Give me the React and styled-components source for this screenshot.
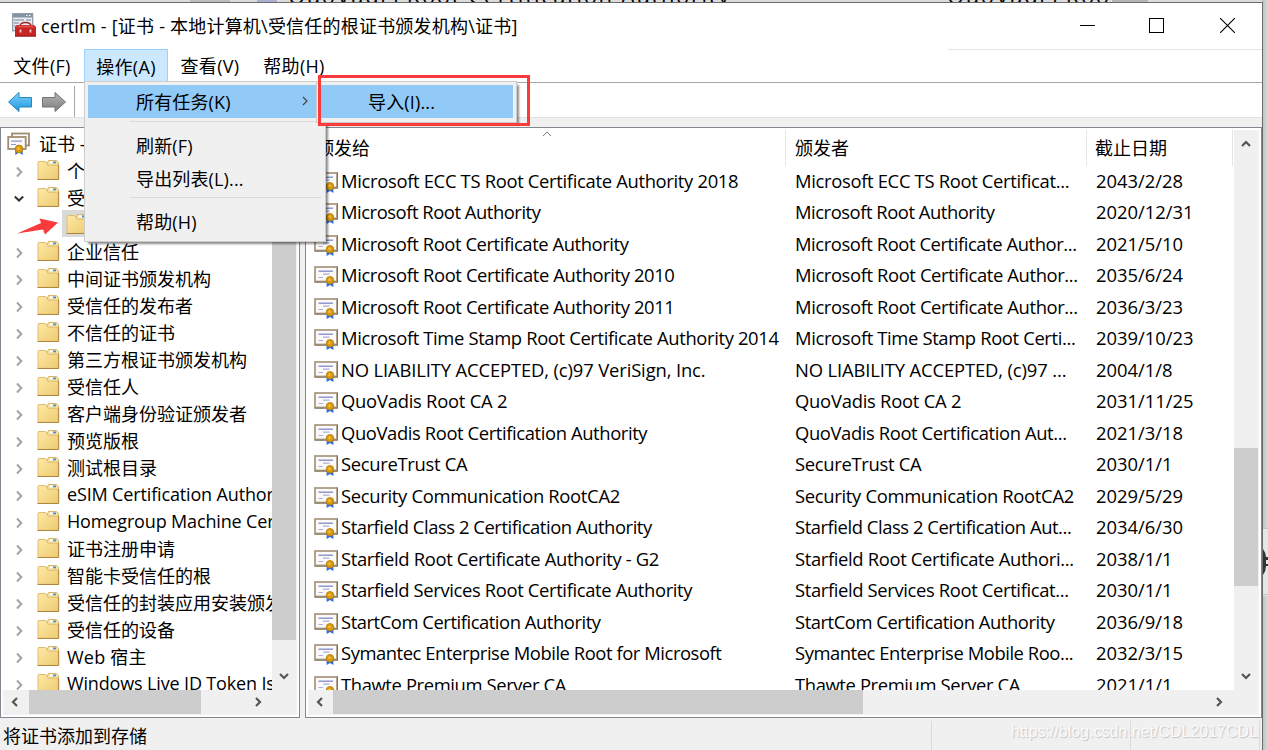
import React from "react";
import styled, { createGlobalStyle } from "styled-components";

const Global = createGlobalStyle`
  *, *::before, *::after { box-sizing: border-box; }
  html, body { margin: 0; padding: 0; overflow: hidden; }
  body {
    font-family: "Open Sans", "Noto Sans CJK SC", sans-serif;
    font-size: 18px;
    color: #000;
    background: #dcdcdc;
  }
  svg { flex: none; }
`;

const Desktop = styled.div`
  position: relative;
  width: 1268px;
  height: 750px;
  padding-top: 2px;
  overflow: hidden;
  background: linear-gradient(90deg, #dcdcdc 1262px, #bdbdbd 1262px, #dadada 1268px);
`;

const Behind = styled.div`
  position: absolute;
  top: 0;
  left: ${(p) => p.$x}px;
  width: ${(p) => p.$w}px;
  height: 2px;
  overflow: hidden;
  font-size: 22px;
  line-height: 26px;
  letter-spacing: ${(p) => p.$track || 0}px;
  white-space: nowrap;
  span { display: block; margin-top: -18px; }
`;

const BehindBlock = styled.div`
  position: absolute;
  top: 0;
  left: ${(p) => p.$x}px;
  width: ${(p) => p.$w}px;
  height: 2px;
  background: ${(p) => p.$c};
`;

const BehindPanel = styled.svg`
  position: absolute;
  left: 1263px;
  top: 528px;
`;

const Window = styled.div`
  position: relative;
  width: 1263px;
  height: 748px;
  display: flex;
  flex-direction: column;
  border-top: 1px solid #6b6b6b;
  border-right: 1px solid #6b6b6b;
  background: #f0f0f0;
`;

const TitleBar = styled.div`
  height: 46px;
  flex: none;
  display: flex;
  align-items: center;
  padding-left: 12px;
  padding-bottom: 2px;
  background: #fff;
`;

const Title = styled.span`
  margin-left: 5px;
  flex: 1;
  font-size: 18px;
  letter-spacing: 0.21px;
  white-space: pre;
`;

const Controls = styled.div`
  display: flex;
  gap: 54px;
  padding-right: 27px;
  svg { display: block; }
  svg + svg + svg { margin-left: 2px; }
`;

const MenuBar = styled.div`
  position: relative;
  height: 34px;
  flex: none;
  display: flex;
  background: #fff;
  border-bottom: 1px solid #a8a8a8;
  &::before {
    content: "";
    position: absolute;
    right: 0;
    top: 0;
    width: 314px;
    height: 1px;
    background: #e6e6e6;
  }
`;

const MenuTitle = styled.div`
  width: 84px;
  height: 33px;
  text-align: center;
  white-space: nowrap;
  letter-spacing: 0.3px;
  background: ${(p) => (p.$open ? "#cce8ff" : "transparent")};
  border: 1px solid ${(p) => (p.$open ? "#99d1ff" : "transparent")};
  line-height: ${(p) => (p.$open ? 34 : 32)}px;
`;

const ToolBar = styled.div`
  height: 35px;
  flex: none;
  display: flex;
  align-items: center;
  gap: 8px;
  padding: 3px 0 0 7px;
  background: #fff;
  border-bottom: 1px solid #e2e2e2;
`;

const ToolDivider = styled.div`
  width: 1px;
  height: 31px;
  margin-left: -1px;
  background: #a9a9a9;
`;

const Panes = styled.div`
  flex: none;
  display: flex;
  gap: 5px;
  height: 591px;
  margin-top: 9px;
`;

const Pane = styled.div`
  width: ${(p) => p.$w}px;
  flex: none;
  display: grid;
  grid-template-columns: minmax(0, 1fr) 25px;
  grid-template-rows: minmax(0, 1fr) 25px;
  padding: 2px;
  border: 1px solid #828790;
  background: #fff;
`;

const TreeBody = styled.div`
  overflow: hidden;
`;

const TreeRow = styled.div`
  display: flex;
  align-items: center;
  height: 27px;
  padding-left: ${(p) => (p.$root ? 4 : 11)}px;
  margin-top: ${(p) => (p.$root ? -1 : 0)}px;
  white-space: nowrap;
`;

const TreeChevron = styled.svg`
  width: 10px;
  height: 12px;
  margin-right: 13px;
  margin-top: 4px;
`;

const Selected = styled.div`
  display: flex;
  align-items: center;
  width: 60px;
  height: 27px;
  margin-left: 48px;
  padding-left: 4px;
  background: #d9d9d9;
`;

const TreeLabel = styled.span`
  margin-left: ${(p) => (p.$root ? 8 : 7)}px;
  letter-spacing: ${(p) => p.$track || 0}px;
`;

const ListBody = styled.div`
  overflow: hidden;
`;

const Columns = styled.div`
  display: grid;
  grid-template-columns: 478px 301px 146px;
  white-space: nowrap;
`;

const HeadRow = styled(Columns)`
  position: relative;
  height: 34.5px;
  line-height: 36px;
`;

const Head = styled.div`
  padding-left: ${(p) => p.$pad || 8}px;
  border-right: 1px solid #e5e5e5;
  &:last-child { border-right: 0; }
`;

const SortMark = styled.svg`
  position: absolute;
  left: 234px;
  top: 0;
`;

const ListRow = styled(Columns)`
  height: 31.5px;
  line-height: 31.5px;
  font-size: 18.4px;
`;

const Cell = styled.div`
  display: flex;
  align-items: center;
  gap: 3px;
  padding-left: ${(p) => (p.$icon ? 6 : 9)}px;
  letter-spacing: ${(p) => p.$track || 0}px;
  svg { margin-top: 5px; }
`;

const VBar = styled.div`
  position: relative;
  background: #f0f0f0;
  padding-top: ${(p) => p.$before}px;
`;

const VThumb = styled.div`
  width: 24px;
  height: ${(p) => p.$h}px;
  background: #cdcdcd;
`;

const HBar = styled.div`
  position: relative;
  grid-column: 1 / 3;
  background: #f0f0f0;
  padding-left: ${(p) => p.$before}px;
`;

const HThumb = styled.div`
  width: ${(p) => p.$w}px;
  height: 24px;
  background: #cdcdcd;
`;

const BarArrow = styled.svg`
  position: absolute;
  left: ${(p) => p.$x}px;
  top: ${(p) => p.$y}px;
`;

const StatusBar = styled.div`
  position: relative;
  flex: 1;
  display: grid;
  grid-template-columns: 932px 199px 129px;
  margin-top: 1px;
`;

const StatusCell = styled.div`
  height: 31px;
  margin-top: 2px;
  padding-left: 3px;
  line-height: 31px;
  border-right: 1px solid #dadada;
`;

const Watermark = styled.div`
  position: absolute;
  right: 4px;
  top: 3px;
  font: 16px/20px "Liberation Sans", sans-serif;
  color: #fafafa;
  text-shadow: 1px 1px 1px #c4c4c4;
  white-space: nowrap;
`;

const Menu = styled.div`
  position: absolute;
  left: ${(p) => p.$x}px;
  top: 78px;
  width: ${(p) => p.$w}px;
  padding: ${(p) => (p.$sub ? "3px 3px 4px 3px" : "3px 8px 4px 3px")};
  background: #f0f0f0;
  border: 1px solid #ccc;
  box-shadow: 3px 3px 2px -1px rgba(0, 0, 0, 0.45);
`;

const MenuItem = styled.div`
  display: flex;
  align-items: center;
  justify-content: space-between;
  height: 33px;
  padding: 0 9px ${(p) => (p.$hot ? 1 : 0)}px 48px;
  letter-spacing: 0.15px;
  white-space: nowrap;
  background: ${(p) => (p.$hot ? "#91c9f7" : "transparent")};
`;

const MenuRule = styled.div`
  height: 1px;
  margin: 3px -4px 6px 42px;
  background: #d9d9d9;
`;

const Highlight = styled.div`
  position: absolute;
  left: 318px;
  top: 72px;
  width: 212px;
  height: 51px;
  border: 3px solid #fb3b3b;
`;

const Pointer = styled.svg`
  position: absolute;
  left: 16px;
  top: 212px;
`;

function FolderIcon() {
  return (
    <svg width="23" height="22" viewBox="0 -1 23 22">
      <defs>
        <linearGradient id="folder" x1="0" y1="0" x2="1" y2="1">
          <stop offset="0" stopColor="#ffe9a6" />
          <stop offset="1" stopColor="#eccb72" />
        </linearGradient>
      </defs>
      <path d="M9.5 5 L11.5 0.5 H19.5 L21.5 2.5 V7 H10Z" fill="#f3dfa8" stroke="#d9b665" />
      <rect x="12.5" y="1.5" width="4" height="1.8" fill="#fff" />
      <rect x="16" y="1.5" width="3" height="1.8" fill="#3d95d8" />
      <path d="M1 2.5 Q1 1.5 2 1.5 H8 Q9 1.5 9.7 2.8 L11 5.2 H21.3 V19.3 H1Z" fill="url(#folder)" stroke="#dfbd6c" />
      <path d="M0.5 19.5 H21.7 V5" fill="none" stroke="#ae8741" />
    </svg>
  );
}

function CertIcon() {
  return (
    <svg width="24" height="22" viewBox="0 0 24 22">
      <rect x="1" y="1" width="22" height="14.5" fill="#fbfaf8" stroke="#ab9b83" strokeWidth="1.8" />
      <path d="M0.5 16.2 H23.5 M23.6 0.5 V16.5" stroke="#76664f" strokeWidth="0.9" />
      <path d="M4.5 5.2 H19" stroke="#8088c8" strokeWidth="1.3" />
      <path d="M9 8.2 H15.5 M4.5 11.5 H9" stroke="#a9b0dc" strokeWidth="1.2" />
      <path d="M12.6 16 V21 L16 19 L19.4 21 V16Z" fill="#2b6be0" />
      <circle cx="16" cy="14.3" r="3.8" fill="#d79a10" stroke="#b67a08" strokeWidth="0.8" />
      <circle cx="15.5" cy="13.8" r="1.4" fill="#f1c037" />
    </svg>
  );
}

function CertStoreIcon() {
  return (
    <svg width="24" height="24" viewBox="0 -1 24 24">
      <rect x="5" y="1.5" width="17" height="12" fill="#fbfaf8" stroke="#a08e72" strokeWidth="1.8" />
      <rect x="1.2" y="5" width="17.5" height="12" fill="#fbfaf8" stroke="#a08e72" strokeWidth="1.8" />
      <path d="M4 9.2 H15 M4 12.5 H9" stroke="#8c95cf" strokeWidth="1.2" />
      <path d="M8.3 17 V23 L12 20.5 L15.7 23 V17Z" fill="#2b6be0" />
      <circle cx="12" cy="17" r="3.9" fill="#d79a10" stroke="#b67a08" strokeWidth="0.8" />
      <circle cx="11.5" cy="16.5" r="1.5" fill="#f1c037" />
    </svg>
  );
}

function AppIcon() {
  return (
    <svg width="24" height="24" viewBox="0 0 24 24">
      <rect x="0.7" y="0.7" width="20" height="17" fill="#e9edf0" stroke="#8996a2" strokeWidth="1.2" />
      <rect x="1" y="1" width="19.5" height="3.5" fill="#8494a4" />
      <path d="M14 2.5 H15.5 M17 2.5 H18.5" stroke="#fff" />
      <path d="M2 7 H12 M14 7 H19 M2 10 H7 M2 13 H5" stroke="#9aa7b3" strokeWidth="1.3" />
      <path d="M8 13.5 Q8 9.5 13.5 9.5 Q19 9.5 19 13.5" fill="none" stroke="#9b2a2a" strokeWidth="1.5" />
      <path d="M3 14 L5 12 H22 L24 14 V23.5 H3Z" fill="#c92424" />
      <path d="M4 14.5 L6 12.6 H21 L23 14.5Z" fill="#dd5048" />
      <path d="M3 23 H24" stroke="#8e1717" />
      <path d="M8.5 16.5 V19.5 M18.5 16.5 V19.5" stroke="#ecd0d0" strokeWidth="1.8" />
    </svg>
  );
}

function NavArrow({ forward }) {
  const id = forward ? "forwardFill" : "backFill";
  return (
    <svg width="26" height="22" viewBox="0 0 26 22">
      <defs>
        <linearGradient id={id} x1="0" y1="0" x2="0" y2="1">
          <stop offset="0" stopColor={forward ? "#b5b5b5" : "#79d3fb"} />
          <stop offset="1" stopColor={forward ? "#7c7c7c" : "#1d96df"} />
        </linearGradient>
      </defs>
      <path
        d="M1.5 11 L12 1.5 V6.5 H24.5 V16 H12 V20.5Z"
        transform={forward ? "translate(26 0) scale(-1 1)" : undefined}
        fill={`url(#${id})`}
        stroke={forward ? "#737373" : "#2a83bd"}
        strokeLinejoin="round"
      />
    </svg>
  );
}

function Arrow({ dir, x, y }) {
  const paths = {
    up: "M2 8 L6 4 L10 8",
    down: "M2 4 L6 8 L10 4",
    left: "M8 2 L4 6 L8 10",
    right: "M4 2 L8 6 L4 10",
  };
  return (
    <BarArrow $x={x} $y={y} width="12" height="12">
      <path d={paths[dir]} fill="none" stroke="#555" strokeWidth="2.2" />
    </BarArrow>
  );
}

function Chevron({ open }) {
  return (
    <TreeChevron viewBox="0 0 10 12">
      <path
        d={open ? "M0.8 3.5 L5 7.5 L9.2 3.5" : "M3 1.5 L7.3 6 L3 10.5"}
        fill="none"
        stroke={open ? "#333" : "#a3a3a3"}
        strokeWidth="2"
      />
    </TreeChevron>
  );
}

const treeRest = [
  ["企业信任"],
  ["中间证书颁发机构"],
  ["受信任的发布者"],
  ["不信任的证书"],
  ["第三方根证书颁发机构"],
  ["受信任人"],
  ["客户端身份验证颁发者"],
  ["预览版根"],
  ["测试根目录"],
  ["eSIM Certification Authorities", -0.15],
  ["Homegroup Machine Certificates", -0.15],
  ["证书注册申请"],
  ["智能卡受信任的根"],
  ["受信任的封装应用安装颁发机构"],
  ["受信任的设备"],
  ["Web 宿主", 0.2],
  ["Windows Live ID Token Issuer", -0.15],
];

const certificates = [
  ["Microsoft ECC TS Root Certificate Authority 2018", "Microsoft ECC TS Root Certificat...", "2043/2/28", -0.32],
  ["Microsoft Root Authority", "Microsoft Root Authority", "2020/12/31", -0.46],
  ["Microsoft Root Certificate Authority", "Microsoft Root Certificate Author...", "2021/5/10", -0.42],
  ["Microsoft Root Certificate Authority 2010", "Microsoft Root Certificate Author...", "2035/6/24", -0.39],
  ["Microsoft Root Certificate Authority 2011", "Microsoft Root Certificate Author...", "2036/3/23", -0.39],
  ["Microsoft Time Stamp Root Certificate Authority 2014", "Microsoft Time Stamp Root Certi...", "2039/10/23", -0.36],
  ["NO LIABILITY ACCEPTED, (c)97 VeriSign, Inc.", "NO LIABILITY ACCEPTED, (c)97 ...", "2004/1/8", -0.13],
  ["QuoVadis Root CA 2", "QuoVadis Root CA 2", "2031/11/25", -0.24],
  ["QuoVadis Root Certification Authority", "QuoVadis Root Certification Aut...", "2021/3/18", -0.39],
  ["SecureTrust CA", "SecureTrust CA", "2030/1/1", -0.3],
  ["Security Communication RootCA2", "Security Communication RootCA2", "2029/5/29", -0.31],
  ["Starfield Class 2 Certification Authority", "Starfield Class 2 Certification Aut...", "2034/6/30", -0.44],
  ["Starfield Root Certificate Authority - G2", "Starfield Root Certificate Authori...", "2038/1/1", -0.35],
  ["Starfield Services Root Certificate Authority", "Starfield Services Root Certificat...", "2030/1/1", -0.36],
  ["StartCom Certification Authority", "StartCom Certification Authority", "2036/9/18", -0.45],
  ["Symantec Enterprise Mobile Root for Microsoft", "Symantec Enterprise Mobile Roo...", "2032/3/15", -0.44],
  ["Thawte Premium Server CA", "Thawte Premium Server CA", "2021/1/1", -0.38],
];

function FolderRow({ label, open, track }) {
  return (
    <TreeRow>
      <Chevron open={open} />
      <FolderIcon />
      <TreeLabel $track={track}>{label}</TreeLabel>
    </TreeRow>
  );
}

export default function App() {
  return (
    <>
      <Global />
      <Desktop>
        <BehindBlock $x={190} $w={40} $c="#bcbcbc" />
        <BehindBlock $x={257} $w={20} $c="#a9afd0" />
        <Behind $x={288} $w={460} $track={1.6}><span>QuoVadis Root Certification Authority</span></Behind>
        <Behind $x={947} $w={168} $track={1.6}><span>QuoVadis Roo...</span></Behind>
        <BehindBlock $x={1112} $w={36} $c="#b5b5b5" />
        <BehindPanel width="5" height="68">
          <rect width="5" height="68" fill="#e6e6e6" />
          <path d="M0 0.5 H5 M0 66.5 H5" stroke="#c2c2c2" />
          <path d="M0 21 Q3 25 3 29 H5 V32 H3 V36 H5 V38 H3 Q3 43 0 47Z" fill="#333" />
        </BehindPanel>
        <Window>
          <TitleBar>
            <AppIcon />
            <Title>certlm - [证书 - 本地计算机\受信任的根证书颁发机构\证书]</Title>
            <Controls>
              <svg width="15" height="15"><path d="M0 7.5 H15" stroke="#000" /></svg>
              <svg width="15" height="15"><rect x="0.5" y="0.5" width="14" height="14" fill="none" stroke="#000" /></svg>
              <svg width="15" height="15"><path d="M0 0 L15 15 M15 0 L0 15" stroke="#000" strokeWidth="1.1" /></svg>
            </Controls>
          </TitleBar>
          <MenuBar>
            <MenuTitle>文件(F)</MenuTitle>
            <MenuTitle $open>操作(A)</MenuTitle>
            <MenuTitle>查看(V)</MenuTitle>
            <MenuTitle>帮助(H)</MenuTitle>
          </MenuBar>
          <ToolBar>
            <NavArrow />
            <NavArrow forward />
            <ToolDivider />
          </ToolBar>
          <Panes>
            <Pane $w={300}>
              <TreeBody>
                <TreeRow $root>
                  <CertStoreIcon />
                  <TreeLabel $root>证书 -</TreeLabel>
                </TreeRow>
                <FolderRow label="个人" />
                <FolderRow label="受信任" open />
                <TreeRow>
                  <Selected><FolderIcon /></Selected>
                </TreeRow>
                {treeRest.map(([label, track]) => (
                  <FolderRow key={label} label={label} track={track} />
                ))}
              </TreeBody>
              <VBar $before={26}>
                <VThumb $h={484} />
                <Arrow dir="up" x={6} y={8} />
                <Arrow dir="down" x={6} y={540} />
              </VBar>
              <HBar $before={26}>
                <HThumb $w={172} />
                <Arrow dir="left" x={6} y={6} />
                <Arrow dir="right" x={249} y={6} />
              </HBar>
            </Pane>
            <Pane $w={957}>
              <ListBody>
                <HeadRow>
                  <Head>颁发给</Head>
                  <Head $pad={9}>颁发者</Head>
                  <Head>截止日期</Head>
                  <SortMark width="10" height="7"><path d="M1 6 L5 2 L9 6" fill="none" stroke="#777" /></SortMark>
                </HeadRow>
                {certificates.map(([subject, issuer, expires, track]) => (
                  <ListRow key={subject}>
                    <Cell $icon $track={track}><CertIcon />{subject}</Cell>
                    <Cell $track={track}>{issuer}</Cell>
                    <Cell>{expires}</Cell>
                  </ListRow>
                ))}
              </ListBody>
              <VBar $before={318}>
                <VThumb $h={138} />
                <Arrow dir="up" x={6} y={8} />
                <Arrow dir="down" x={6} y={540} />
              </VBar>
              <HBar $before={25}>
                <HThumb $w={530} />
                <Arrow dir="left" x={6} y={6} />
                <Arrow dir="right" x={905} y={6} />
              </HBar>
            </Pane>
          </Panes>
          <StatusBar>
            <StatusCell>将证书添加到存储</StatusCell>
            <StatusCell />
            <StatusCell />
            <Watermark>https://blog.csdn.net/CDL2017CDL</Watermark>
          </StatusBar>
          <Menu $x={84} $w={242}>
            <MenuItem $hot>
              所有任务(K)
              <svg width="6" height="10"><path d="M1 1 L5 5 L1 9" fill="none" stroke="#444" strokeWidth="1.2" /></svg>
            </MenuItem>
            <MenuRule />
            <MenuItem>刷新(F)</MenuItem>
            <MenuItem>导出列表(L)...</MenuItem>
            <MenuRule />
            <MenuItem>帮助(H)</MenuItem>
          </Menu>
          <Menu $x={316} $w={201} $sub>
            <MenuItem $hot>导入(I)...</MenuItem>
          </Menu>
          <Highlight />
          <Pointer width="44" height="24">
            <path d="M1 18.5 L25 8 L23.5 3.5 L42 7.5 L29 19.5 L27 14.5Z" fill="#fb3b3b" />
          </Pointer>
        </Window>
      </Desktop>
    </>
  );
}
